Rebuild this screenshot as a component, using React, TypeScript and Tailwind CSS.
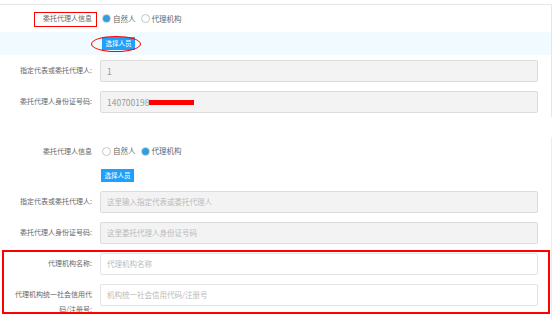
import React from "react";

const Label = ({ children }: { children: React.ReactNode }) => (
  <div className="w-[78px] ml-[14px] mr-[8px] shrink-0 text-right text-[7px] leading-[15px] pt-[3px] text-[#666]">
    {children}
  </div>
);

interface IField {
  label: string;
  value?: React.ReactNode;
  placeholder?: string;
  disabled?: boolean;
}

const Field = ({ label, value, placeholder, disabled }: IField) => (
  <div className="flex items-start h-[22px]">
    <Label>{label}</Label>
    <div
      className={
        "w-[438px] h-[22px] shrink-0 border rounded-[2px] px-[6px] flex items-center " +
        (disabled ? "bg-[#f3f3f3] border-[#dcdcdc]" : "bg-white border-[#e3e3e6]")
      }
    >
      {value ? (
        <span className="text-[8.5px] text-[#999] flex items-center">{value}</span>
      ) : (
        <span className="text-[7.5px] text-[#bbb]">{placeholder}</span>
      )}
    </div>
  </div>
);

const Radio = ({ checked, text }: { checked?: boolean; text: string }) => (
  <div className="flex items-center">
    <span className="w-[9px] h-[9px] rounded-full border border-[#c6c6c6] bg-white flex items-center justify-center">
      {checked && <span className="w-[7px] h-[7px] rounded-full bg-[#2e9fdb]" />}
    </span>
    <span className="ml-[2px] text-[7.5px] text-[#666]">{text}</span>
  </div>
);

const AgentRow = ({ org }: { org?: boolean }) => (
  <div className="flex items-center h-full">
    <div className="w-[78px] ml-[14px] shrink-0 text-right text-[7px] text-[#666]">委托代理人信息</div>
    <div className="ml-[10px] flex items-center gap-[5px]">
      <Radio checked={!org} text="自然人" />
      <Radio checked={org} text="代理机构" />
    </div>
  </div>
);

const PickButton = () => (
  <div className="h-[13px] w-[33px] bg-[#1ea0fb] text-white text-[6.5px] flex items-center justify-center">
    选择人员
  </div>
);

export default function App() {
  return (
    <div
      className="relative w-[554px] h-[319px] overflow-hidden bg-white"
      style={{ fontFamily: '"Noto Sans CJK SC", "Noto Sans", sans-serif' }}
    >
      <div className="h-[4px]" />
      {/* first panel */}
      <div className="w-[552px] border-t border-r border-[#e6e6e6] pb-[4px]">
        <div className="h-[27px]">
          <AgentRow />
        </div>
        <div className="h-[23px] bg-[#f1faff] flex items-center pl-[102px]">
          <PickButton />
        </div>
        <div className="mt-[5px] flex flex-col gap-[9px]">
          <Field label="指定代表或委托代理人:" value="1" disabled />
          <Field
            label="委托代理人身份证号码:"
            disabled
            value={
              <>
                140700198
                <span className="inline-block w-[45px] h-[5px] bg-[#ff0000]" />
              </>
            }
          />
        </div>
      </div>

      {/* second panel */}
      <div className="mt-[20px] w-[552px] h-[200px] border-r border-[#ececec]">
        <div className="h-[28px]">
          <AgentRow org />
        </div>
        <div className="mt-[4px] pl-[101px]">
          <PickButton />
        </div>
        <div className="mt-[9px] flex flex-col gap-[9px]">
          <Field label="指定代表或委托代理人:" placeholder="这里输入指定代表或委托代理人" disabled />
          <Field label="委托代理人身份证号码:" placeholder="这里委托代理人身份证号码" disabled />
          <Field label="代理机构名称:" placeholder="代理机构名称" />
          <Field label="代理机构统一社会信用代码/注册号:" placeholder="机构统一社会信用代码/注册号" />
        </div>
      </div>

      {/* annotations */}
      <div className="absolute left-[34px] top-[12px] w-[63px] h-[15px] border border-[#ff0000]" />
      <div className="absolute left-[91px] top-[36px] w-[50px] h-[16px] border-[1.5px] border-[#ff0000] rounded-[50%]" />
      <div className="absolute left-[2px] top-[250px] w-[548px] h-[64px] border-2 border-[#ff0000]" />
    </div>
  );
}
